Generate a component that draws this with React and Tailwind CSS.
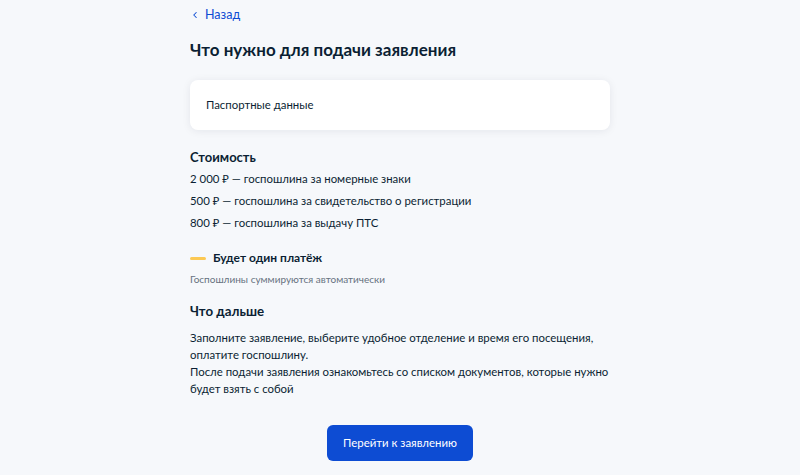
import { ChevronLeft } from "lucide-react";

const fees = [
  "2 000 ₽ — госпошлина за номерные знаки",
  "500 ₽ — госпошлина за свидетельство о регистрации",
  "800 ₽ — госпошлина за выдачу ПТС",
];

export default function App() {
  return (
    <div className="min-h-[475px] w-full bg-[#f6f8fb] font-['Lato','Noto_Sans',sans-serif] text-[#0b1f33]">
      <div className="mx-auto flex w-[420px] flex-col pt-[6px]">
        <a href="#" className="flex h-[18px] items-center gap-[5px] text-[12.5px] text-[#0d4cd3]">
          <ChevronLeft className="size-[10px]" strokeWidth={2.5} />
          <span>Назад</span>
        </a>

        <h1 className="mt-[15px] text-[17px] font-bold leading-[22px]">
          Что нужно для подачи заявления
        </h1>

        <div className="mt-[19px] flex h-[50px] items-center rounded-[8px] bg-white px-[16px] text-[11.4px] shadow-[0_1px_8px_rgba(11,31,51,0.08)]">
          Паспортные данные
        </div>

        <h2 className="mt-[18px] text-[13px] font-bold leading-[18px]">Стоимость</h2>
        <div className="mt-[2px] flex flex-col text-[11.4px] leading-[22px]">
          {fees.map((fee) => (
            <p key={fee}>{fee}</p>
          ))}
        </div>

        <div className="mt-[15px] flex h-[18px] items-center gap-[7px]">
          <span className="h-[3px] w-[16px] rounded-full bg-[#fcc954]" />
          <span className="text-[12px] font-bold leading-[18px]">Будет один платёж</span>
        </div>
        <p className="mt-[5px] text-[10px] leading-[14px] text-[#66727f]">
          Госпошлины суммируются автоматически
        </p>

        <h2 className="mt-[16px] text-[13.3px] font-bold leading-[18px]">Что дальше</h2>
        <div className="mt-[9px] text-[11.4px] leading-[17px]">
          <p>Заполните заявление, выберите удобное отделение и время его посещения, оплатите госпошлину.</p>
          <p>После подачи заявления ознакомьтесь со списком документов, которые нужно будет взять с собой</p>
        </div>

        <div className="mt-[28px] flex justify-center">
          <button className="h-[36px] rounded-[6px] bg-[#0d4cd3] px-[16px] text-[11.4px] text-white">
            Перейти к заявлению
          </button>
        </div>
      </div>
    </div>
  );
}
